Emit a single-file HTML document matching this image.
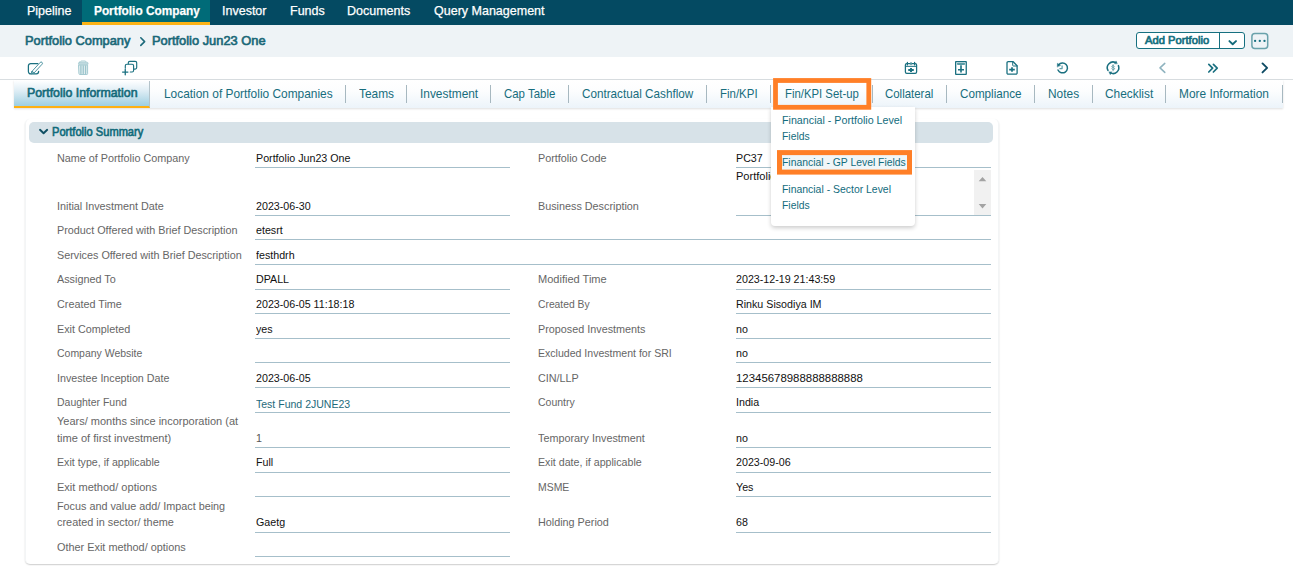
<!DOCTYPE html>
<html>
<head>
<meta charset="utf-8">
<title>Portfolio Company</title>
<style>
html,body{margin:0;padding:0;}
body{width:1293px;height:566px;overflow:hidden;background:#fff;font-family:"Liberation Sans",sans-serif;font-size:12px;color:#111;position:relative;}
.a{position:absolute;white-space:nowrap;transform-origin:0 50%;}
/* nav */
#nav{position:absolute;left:0;top:0;width:1293px;height:25px;background:#044a62;}
#nav .it{-webkit-text-stroke:.25px #fff;position:absolute;top:0;height:25px;line-height:21.500px;font-size:13px;color:#fff;white-space:nowrap;transform-origin:0 50%;transform:scaleX(.962);}
#navact{position:absolute;left:82px;top:0;width:128px;height:22px;background:#006b78;border-bottom:3px solid #fcb316;}
/* breadcrumb */
#bc{position:absolute;left:0;top:25px;width:1293px;height:32px;background:#eef3f6;}
#bc .t{position:absolute;top:0;line-height:31px;height:31px;font-size:13px;font-weight:normal;-webkit-text-stroke:.65px #1a6878;color:#1a6878;white-space:nowrap;transform-origin:0 50%;transform:scaleX(.985);}
/* toolbar */
#tb{position:absolute;left:0;top:57px;width:1293px;height:22px;background:#fff;border-bottom:1px solid #d9dee1;}
/* tabs */
#tabs{position:absolute;left:14px;top:80px;width:1269px;height:28px;background:linear-gradient(#fff,#fcfdfe 40%,#ecf4fa);box-shadow:0 1px 2px rgba(0,0,0,.13);}
#tabact{position:absolute;left:14px;top:81px;width:135px;height:25px;background:linear-gradient(#fdfeff 0%,#e2eff6 35%,#b8dbe9 75%,#9ccfe2 100%);border-bottom:2px solid #feb012;border-right:1px solid #b4c3ca;}
.tab{position:absolute;top:80px;line-height:27px;font-size:13px;color:#176d7d;white-space:nowrap;transform-origin:0 50%;transform:scaleX(.915);}
.sep{position:absolute;top:85px;width:1px;height:18px;background:#a7b8c0;}
/* section */
#card{position:absolute;left:25px;top:119px;width:974px;height:445px;border-radius:5px;box-shadow:0 1px 1.500px rgba(0,0,0,.2);border-left:1px solid #f3f5f6;border-right:1px solid #f3f5f6;box-sizing:border-box;}
#sec{position:absolute;left:29px;top:122px;width:964px;height:21px;background:#d7e2e8;border-radius:5px;}
#sec .t{position:absolute;left:23px;top:0;line-height:20px;font-size:12px;-webkit-text-stroke:.6px #106a7a;color:#106a7a;transform-origin:0 50%;transform:scaleX(.925);white-space:nowrap;}
.l{position:absolute;left:57px;font-size:11.500px;color:#666;white-space:nowrap;transform-origin:0 50%;transform:scaleX(.939);line-height:16px;}
.l2{left:538px;}
.v{position:absolute;left:256px;font-size:11.500px;color:#111;white-space:nowrap;transform-origin:0 50%;transform:scaleX(.929);line-height:16px;}
.v2{left:736px;}
.u{position:absolute;left:255px;width:255px;height:1px;background:#a6bfca;}
.u2{left:736px;width:255px;}
.uw{left:255px;width:736px;}

#addbtn{position:absolute;left:1136px;top:32px;width:107px;height:15px;border:1px solid #167080;border-radius:3px;background:#fff;}
#addbtn .t{position:absolute;left:7.800px;top:0;line-height:15px;font-size:11px;-webkit-text-stroke:.7px #16707f;color:#16707f;white-space:nowrap;transform-origin:0 50%;transform:scaleX(1.018);}
#addbtn .dv{position:absolute;left:82px;top:0;width:1px;height:15px;background:#167080;}
#morebtn{position:absolute;left:1251px;top:33px;width:15px;height:14px;border:1.500px solid #6fa5ad;border-radius:3.500px;}
#morebtn i{position:absolute;top:6.200px;width:2.200px;height:2.200px;border-radius:50%;background:#167080;}
#ta{position:absolute;left:974px;top:170px;width:17px;height:45px;background:#f1f1f1;}
/* dropdown */
#dd{position:absolute;left:771px;top:107px;width:144px;height:119px;background:#fff;border-radius:0 0 4px 4px;box-shadow:0 2px 4px rgba(0,0,0,.2);}
#dd .t{position:absolute;left:11px;font-size:11.500px;line-height:16px;color:#126c7d;white-space:nowrap;transform-origin:0 50%;transform:scaleX(.9);}
#dd .gp{position:absolute;left:8px;top:45px;width:131px;height:20px;background:#f1f6f8;}
</style>
</head>
<body>

<div id="nav">
  <div id="navact"></div>
  <div class="it" style="left:26.500px">Pipeline</div>
  <div class="it" style="left:93.500px;font-weight:bold;transform:scaleX(.91)">Portfolio Company</div>
  <div class="it" style="left:222px">Investor</div>
  <div class="it" style="left:290px">Funds</div>
  <div class="it" style="left:347px">Documents</div>
  <div class="it" style="left:434px">Query Management</div>
</div>

<div id="bc">
  <div class="t" style="left:25px">Portfolio Company</div>
  <div class="t" style="left:152px;transform:scaleX(.988)">Portfolio Jun23 One</div>
</div>

<div id="tb"></div>
<svg class="a" style="left:0;top:56px" width="1293" height="24" viewBox="0 56 1293 24" fill="none" stroke="#1a7080" stroke-width="1.4" stroke-linecap="round" stroke-linejoin="round">
  <!-- edit -->
  <path d="M37.800 63.500H30.700a2.300 2.300 0 0 0-2.300 2.300v5.800a2.300 2.300 0 0 0 2.300 2.300h5.600a2.300 2.300 0 0 0 2.300-2.300V71.300" stroke-width="1.250"/>
  <g transform="translate(32.900 72.300) rotate(-47.500)" stroke="#3f8c99" stroke-width=".85"><path d="M0-1.300H12.200a1.300 1.300 0 0 1 0 2.600H0L-1.900 0z" fill="#fff"/><path d="M0-1.300L-1.900 0 0 1.300z" fill="#8dbcc4"/></g>
  <!-- trash (disabled) -->
  <g stroke="#a3c9d0" stroke-width="1">
    <path d="M80.700 62v-.2a.8.800 0 0 1 .8-.8h3.500a.8.800 0 0 1 .8.800v.2" stroke-width=".9"/>
    <path d="M79.600 62.200h7.300a1.100 1.100 0 0 1 1.100 1.100v1h-9.500v-1a1.100 1.100 0 0 1 1.100-1.100z" fill="#c4dde2" stroke-width=".8"/>
    <path d="M78.900 65.100h8.700v8.600a.8.800 0 0 1-.8.800h-7.100a.8.800 0 0 1-.8-.8z" fill="#e3eff1"/>
    <path d="M80.900 66v7.600M83.250 66v7.600M85.600 66v7.600" stroke="#9cc5cc" stroke-width="1.300"/>
  </g>
  <!-- clone -->
  <path d="M128.300 63.800v-1a1.500 1.500 0 0 1 1.500-1.500h5.400a1.500 1.500 0 0 1 1.500 1.500v4.800a1.500 1.500 0 0 1-1.500 1.500h-.9" stroke-width="1.150"/>
  <path d="M125.300 68.200v-2.400a1.500 1.500 0 0 1 1.500-1.500h5.300a1.500 1.500 0 0 1 1.500 1.500v4.700a1.500 1.500 0 0 1-1.500 1.500h-1.800" stroke-width="1.150"/>
  <path d="M122.600 72.100h5.300M125.250 69.400v5.400" stroke-width="1.300"/>
  <!-- calendar plus -->
  <rect x="905.400" y="63.700" width="11.200" height="9.600" rx="1.400" stroke-width="1.250"/>
  <path d="M905.400 66.350h11.200" stroke-width="1"/>
  <path d="M907.400 62.300v2.600M914.600 62.300v2.600" stroke-width="1.200"/>
  <path d="M911 62.800v1.600" stroke="#5a9ca7" stroke-width="1.600"/>
  <path d="M908.250 70h5.500M911 67.900v4.200" stroke-width="1.900" stroke-linecap="butt"/>
  <!-- note plus -->
  <rect x="955.650" y="61.550" width="10.600" height="12.800" rx=".3" stroke-width="1.300"/>
  <path d="M958 63.900h6" stroke="#5a9ca7" stroke-width="2.200"/>
  <path d="M958 69.700h6M961 65.200v7.200" stroke-width="1.600" stroke-linecap="butt"/>
  <!-- file plus -->
  <path d="M1007 62.900a1.200 1.200 0 0 1 1.200-1.200h5l3.900 4v7.300a1.200 1.200 0 0 1-1.200 1.200h-7.700a1.200 1.200 0 0 1-1.200-1.200z" stroke-width="1.300"/>
  <path d="M1012.700 61.900v3.300a.8.800 0 0 0 .8.800h3.600" stroke-width="1"/>
  <path d="M1009.200 69.550h5.600M1012 67.300v4.500" stroke-width="1.700" stroke-linecap="butt"/>
  <!-- history -->
  <path d="M1058.60 64.85A4.95 4.95 0 1 1 1058.01 69.99" stroke-width="1.500"/>
  <path d="M1057.28 66.79L1057.38 63.24L1060.36 65.25z" fill="#1a7080" stroke-width=".4"/>
  <path d="M1062.100 65.500v3.100h-2.700" stroke="#5fa0ab" stroke-width="1.250" stroke-linecap="butt"/>
  <!-- currency refresh -->
  <path d="M1107.97 70.45A5.75 5.75 0 0 1 1115.75 62.67" stroke-width="1.550"/>
  <path d="M1118.38 65.60A5.75 5.75 0 0 1 1110.53 72.92" stroke-width="1.550"/>
  <path d="M1117.22 63.52L1116.08 60.90L1114.58 63.50zM1109.03 72.12L1110.26 74.70L1111.67 72.05z" fill="#1a7080" stroke-width=".4"/>
  <path d="M1114.500 66.300c-.3-.8-2.700-1-2.700.3 0 1.300 2.800.6 2.800 2 0 1.400-2.500 1.200-2.900.2M1113.100 64.700v6.100" stroke="#5b98a3" stroke-width=".9"/>
  <!-- prev (disabled) -->
  <path d="M1164.800 63.400l-4.800 4.500 4.800 4.500" stroke="#8fb3bf" stroke-width="1.500"/>
  <!-- double next -->
  <path d="M1208.800 64.400l3.800 3.800-3.800 3.800M1213.400 64.400l3.800 3.800-3.800 3.800" stroke-width="1.700"/>
  <!-- next -->
  <path d="M1262.500 63.400l4.600 4.500-4.600 4.500" stroke="#0d4a63" stroke-width="1.900"/>
</svg>

<svg class="a" style="left:136px;top:33px" width="14" height="16" viewBox="136 33 14 16" fill="none" stroke="#1d6a7b" stroke-width="1.6" stroke-linecap="round" stroke-linejoin="round"><path d="M140.800 37.800l3.800 3.800-3.800 3.800"/></svg>
<div id="addbtn"><div class="t">Add Portfolio</div><div class="dv"></div>
<svg style="position:absolute;left:90px;top:5px" width="12" height="10" viewBox="0 0 12 10" fill="none" stroke="#136a7a" stroke-width="1.900" stroke-linecap="round" stroke-linejoin="round"><path d="M2.400 3.100l3.300 3.100 3.300-3.100"/></svg></div>
<svg class="a" style="left:1248px;top:30px" width="24" height="22" viewBox="1248 30 24 22"><rect x="1251.900" y="33.500" width="15.800" height="15" rx="3" fill="#eef3f6" stroke="#6aa2ab" stroke-width="1.500"/><circle cx="1255.100" cy="40.900" r="1.150" fill="#167080"/><circle cx="1259.800" cy="40.900" r="1.150" fill="#167080"/><circle cx="1264.500" cy="40.900" r="1.150" fill="#167080"/></svg>


<div id="tabs"></div>
<div id="tabact"></div>
<div class="tab" style="left:27px;-webkit-text-stroke:.65px #146a7a;color:#146a7a;transform:scaleX(.95);line-height:25px">Portfolio Information</div>
<div class="tab" style="left:164px">Location of Portfolio Companies</div>
<div class="tab" style="left:359px">Teams</div>
<div class="tab" style="left:420px">Investment</div>
<div class="tab" style="left:504px;transform:scaleX(0.88)">Cap Table</div>
<div class="tab" style="left:582px;transform:scaleX(0.9)">Contractual Cashflow</div>
<div class="tab" style="left:720px;transform:scaleX(0.882)">Fin/KPI</div>
<div class="tab" style="left:784.500px;transform:scaleX(0.873)">Fin/KPI Set-up</div>
<div class="tab" style="left:885px;transform:scaleX(0.88)">Collateral</div>
<div class="tab" style="left:960px;transform:scaleX(0.897)">Compliance</div>
<div class="tab" style="left:1048px">Notes</div>
<div class="tab" style="left:1105px">Checklist</div>
<div class="tab" style="left:1179px">More Information</div>

<div class="sep" style="left:345px"></div>
<div class="sep" style="left:406px"></div>
<div class="sep" style="left:490px"></div>
<div class="sep" style="left:568px"></div>
<div class="sep" style="left:706px"></div>
<div class="sep" style="left:770px"></div>
<div class="sep" style="left:872px"></div>
<div class="sep" style="left:946px"></div>
<div class="sep" style="left:1034px"></div>
<div class="sep" style="left:1092px"></div>
<div class="sep" style="left:1165px"></div>
<div class="sep" style="left:1282px"></div>
<div id="card"></div>
<div id="sec"><svg style="position:absolute;left:9px;top:5px" width="12" height="10" viewBox="0 0 12 10" fill="none" stroke="#0f4f63" stroke-width="1.900" stroke-linecap="round" stroke-linejoin="round"><path d="M2 2.800l3.600 3.500 3.600-3.500"/></svg><div class="t">Portfolio Summary</div></div>

<!-- rows -->
<div class="l" style="top:150px">Name of Portfolio Company</div>
<div class="v" style="top:150px">Portfolio Jun23 One</div>
<div class="u" style="top:167px"></div>
<div class="l" style="top:198px">Initial Investment Date</div>
<div class="v" style="top:198px">2023-06-30</div>
<div class="u" style="top:215px"></div>
<div class="l" style="top:222px">Product Offered with Brief Description</div>
<div class="v" style="top:222px">etesrt</div>
<div class="u uw" style="top:239px"></div>
<div class="l" style="top:247px">Services Offered with Brief Description</div>
<div class="v" style="top:247px">festhdrh</div>
<div class="u uw" style="top:264px"></div>
<div class="l" style="top:271px">Assigned To</div>
<div class="v" style="top:271px">DPALL</div>
<div class="u" style="top:289px"></div>
<div class="l" style="top:296px">Created Time</div>
<div class="v" style="top:296px">2023-06-05 11:18:18</div>
<div class="u" style="top:313px"></div>
<div class="l" style="top:321px">Exit Completed</div>
<div class="v" style="top:321px">yes</div>
<div class="u" style="top:338px"></div>
<div class="l" style="top:345px;transform:scaleX(0.91)">Company Website</div>
<div class="u" style="top:362px"></div>
<div class="l" style="top:370px;transform:scaleX(0.93)">Investee Inception Date</div>
<div class="v" style="top:370px">2023-06-05</div>
<div class="u" style="top:387px"></div>
<div class="l" style="top:394px;transform:scaleX(0.91)">Daughter Fund</div>
<div class="v" style="top:396px;color:#1d6a7b;transform:scaleX(0.915)">Test Fund 2JUNE23</div>
<div class="u" style="top:412px"></div>
<div class="l" style="top:413px;transform:scaleX(0.956)">Years/ months since incorporation (at</div>
<div class="l" style="top:430px;transform:scaleX(0.961)">time of first investment)</div>
<div class="v" style="top:430px;color:#555">1</div>
<div class="u" style="top:447px"></div>
<div class="l" style="top:454px;transform:scaleX(0.924)">Exit type, if applicable</div>
<div class="v" style="top:454px">Full</div>
<div class="u" style="top:472px"></div>
<div class="l" style="top:479px;transform:scaleX(0.959)">Exit method/ options</div>
<div class="u" style="top:496px"></div>
<div class="l" style="top:498px">Focus and value add/ Impact being</div>
<div class="l" style="top:514px;transform:scaleX(0.947)">created in sector/ theme</div>
<div class="v" style="top:514px">Gaetg</div>
<div class="u" style="top:532px"></div>
<div class="l" style="top:539px;transform:scaleX(0.946)">Other Exit method/ options</div>
<div class="u" style="top:556px"></div>
<div class="l l2" style="top:150px">Portfolio Code</div>
<div class="v v2" style="top:150px">PC37</div>
<div class="u u2" style="top:167px"></div>
<div class="l l2" style="top:198px">Business Description</div>
<div class="u u2" style="top:215px"></div>
<div class="l l2" style="top:271px;transform:scaleX(0.959)">Modified Time</div>
<div class="v v2" style="top:271px">2023-12-19 21:43:59</div>
<div class="u u2" style="top:289px"></div>
<div class="l l2" style="top:296px;transform:scaleX(0.897)">Created By</div>
<div class="v v2" style="top:296px">Rinku Sisodiya IM</div>
<div class="u u2" style="top:313px"></div>
<div class="l l2" style="top:321px">Proposed Investments</div>
<div class="v v2" style="top:321px">no</div>
<div class="u u2" style="top:338px"></div>
<div class="l l2" style="top:345px;transform:scaleX(0.918)">Excluded Investment for SRI</div>
<div class="v v2" style="top:345px">no</div>
<div class="u u2" style="top:362px"></div>
<div class="l l2" style="top:370px">CIN/LLP</div>
<div class="v v2" style="top:370px;transform:scaleX(.992)">12345678988888888888</div>
<div class="u u2" style="top:387px"></div>
<div class="l l2" style="top:394px;transform:scaleX(0.912)">Country</div>
<div class="v v2" style="top:394px">India</div>
<div class="u u2" style="top:412px"></div>
<div class="l l2" style="top:430px">Temporary Investment</div>
<div class="v v2" style="top:430px">no</div>
<div class="u u2" style="top:447px"></div>
<div class="l l2" style="top:454px;transform:scaleX(0.927)">Exit date, if applicable</div>
<div class="v v2" style="top:454px">2023-09-06</div>
<div class="u u2" style="top:472px"></div>
<div class="l l2" style="top:479px;transform:scaleX(0.907)">MSME</div>
<div class="v v2" style="top:479px">Yes</div>
<div class="u u2" style="top:496px"></div>
<div class="l l2" style="top:514px">Holding Period</div>
<div class="v v2" style="top:514px">68</div>
<div class="u u2" style="top:532px"></div>
<div class="v v2" style="top:168px;transform:scaleX(.96)">Portfolio</div>
<div id="ta"><svg width="17" height="45" viewBox="0 0 17 45"><path d="M8.500 7l3.800 4.200h-7.600z M8.500 38.400l3.800-4.400h-7.600z" fill="#a3a3a3"/></svg></div>
<!-- /rows -->

<div id="dd">
  <div class="gp"></div>
  <div class="t" style="top:5px;left:10.800px;transform:scaleX(0.931)">Financial - Portfolio Level</div>
  <div class="t" style="top:21px;left:10.800px;transform:scaleX(0.901)">Fields</div>
  <div class="t" style="top:47px;left:10.800px;transform:scaleX(0.902)">Financial - GP Level Fields</div>
  <div class="t" style="top:74px;left:10.800px;transform:scaleX(0.907)">Financial - Sector Level</div>
  <div class="t" style="top:90px;left:10.800px;transform:scaleX(0.901)">Fields</div>
</div>
<svg class="a" style="left:765px;top:72px" width="160" height="110" viewBox="765 72 160 110" fill="none" stroke="#ff7f27">
  <rect x="775.500" y="80.500" width="93.300" height="26.800" stroke-width="4.800"/>
  <rect x="779.500" y="152.600" width="130" height="19.500" stroke-width="5"/>
</svg>

</body>
</html>
